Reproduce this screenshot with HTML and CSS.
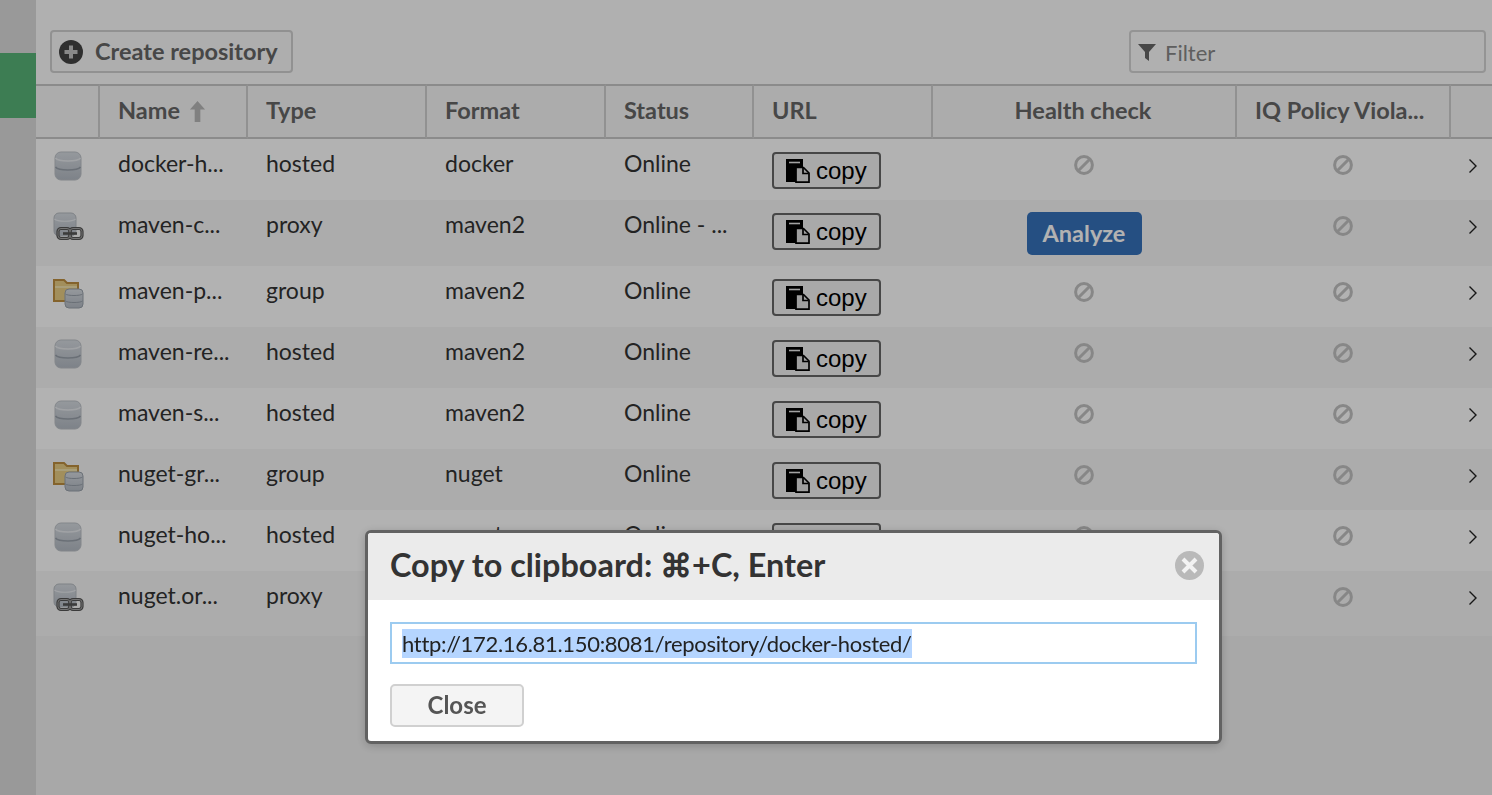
FILE: index.html
```html
<!DOCTYPE html>
<html lang="en">
<head>
  <meta charset="UTF-8">
  <meta name="viewport" content="width=device-width, initial-scale=1.0">
  <title>Repositories</title>
  <link rel="stylesheet" href="styles.css">
</head>
<body>
  <!-- shared icons -->
  <svg class="icon-defs" width="0" height="0">
    <defs>
      <linearGradient id="dbFill" x1="0" y1="0" x2="0" y2="1">
        <stop offset="0" stop-color="#d6dbe1"/>
        <stop offset="1" stop-color="#b4bbc4"/>
      </linearGradient>
      <symbol id="db" viewBox="0 0 32 32">
        <rect x="3" y="2" width="26" height="28" rx="6" fill="url(#dbFill)" stroke="#bcc1c7" stroke-width="1"/>
        <path d="M3.500 8c3 4 22 4 25 0" fill="none" stroke="#e6e9ed" stroke-width="1.500"/>
        <path d="M3.500 17c3 4 22 4 25 0" fill="none" stroke="#98a0aa" stroke-width="1.500"/>
      </symbol>
      <symbol id="proxy" viewBox="0 0 32 32">
        <rect x="2" y="2" width="22" height="23" rx="5" fill="url(#dbFill)" stroke="#b5bac0" stroke-width="1"/>
        <path d="M2.500 8c3 3 18 3 21 0" fill="none" stroke="#e6e9ed" stroke-width="1.200"/>
        <rect x="6" y="17.500" width="12" height="10" rx="3" fill="none" stroke="#555" stroke-width="3.200"/>
        <rect x="18" y="17.500" width="12" height="10" rx="3" fill="none" stroke="#555" stroke-width="3.200"/>
        <rect x="6" y="17.500" width="12" height="10" rx="3" fill="none" stroke="#b0b0b0" stroke-width="0.900"/>
        <rect x="18" y="17.500" width="12" height="10" rx="3" fill="none" stroke="#b0b0b0" stroke-width="0.900"/>
        <path d="M11 22.500h14" stroke="#555" stroke-width="2.600"/>
      </symbol>
      <symbol id="group" viewBox="0 0 32 32">
        <path d="M2 3h10l3 3h11v18H2z" fill="#e8cd85" stroke="#bd8f3f" stroke-width="2"/>
        <path d="M3 10h22" stroke="#f3e2ad" stroke-width="2"/>
        <rect x="13" y="12" width="18" height="19" rx="4" fill="url(#dbFill)" stroke="#9aa2ac" stroke-width="1"/>
        <path d="M13.500 17c2 2 15 2 17 0M13.500 24c2 2 15 2 17 0" fill="none" stroke="#98a0aa" stroke-width="1"/>
      </symbol>
      <symbol id="ban" viewBox="0 0 20 20">
        <circle cx="10" cy="10" r="8.400" fill="none" stroke="#c2c2c2" stroke-width="3"/>
        <path d="M4.500 15.500l11-11" stroke="#c2c2c2" stroke-width="3"/>
      </symbol>
      <symbol id="chevron" viewBox="0 0 10 16">
        <path d="M1.500 1.500L8 8l-6.500 6.500" fill="none" stroke="#222" stroke-width="1.400"/>
      </symbol>
      <symbol id="files" viewBox="0 0 24 24">
        <path d="M0 0h17v8h-7v15H0z" fill="#000"/>
        <path d="M3 3.500h11" stroke="#e8e8e8" stroke-width="1.600"/>
        <path d="M10 8.500h7.500l5.500 5.500v9.200H10z" fill="#e4e4e4" stroke="#000" stroke-width="1.700"/>
        <path d="M17 9v5.500h5.500" fill="none" stroke="#000" stroke-width="1.700"/>
      </symbol>
    </defs>
  </svg>

  <div class="page">
    <aside class="sidebar">
      <div class="sidebar-active"></div>
    </aside>

    <main class="content">
      <div class="toolbar">
        <button class="create-btn" type="button">
          <svg class="create-icon" viewBox="0 0 24 24">
            <circle cx="12" cy="12" r="12" fill="#444"/>
            <path d="M12 5.500v13M5.500 12h13" stroke="#c4c4c4" stroke-width="4"/>
          </svg>
          Create repository
        </button>
        <div class="filter">
          <svg class="filter-icon" viewBox="0 0 18 18">
            <path d="M0 1h18l-7 8v9l-4-3V9z" fill="#666"/>
          </svg>
          Filter
        </div>
      </div>

      <table class="repo-table">
        <colgroup>
          <col class="col-icon"><col class="col-name"><col class="col-type"><col class="col-format">
          <col class="col-status"><col class="col-url"><col class="col-health"><col class="col-iq"><col class="col-arrow">
        </colgroup>
        <thead>
          <tr>
            <th></th>
            <th>Name <svg class="sort-icon" viewBox="0 0 18 22"><path d="M9 0l8 9h-5v13H6V9H1z" fill="#b8b8b8"/></svg></th>
            <th>Type</th>
            <th>Format</th>
            <th>Status</th>
            <th>URL</th>
            <th class="center">Health check</th>
            <th>IQ Policy Viola...</th>
            <th></th>
          </tr>
        </thead>
        <tbody>
          <tr>
            <td class="icon-cell"><svg class="repo-icon"><use href="#db"/></svg></td>
            <td>docker-h...</td><td>hosted</td><td>docker</td><td>Online</td>
            <td><button class="copy-btn" type="button"><svg class="copy-icon"><use href="#files"/></svg>copy</button></td>
            <td class="center"><svg class="ban"><use href="#ban"/></svg></td>
            <td class="center"><svg class="ban"><use href="#ban"/></svg></td>
            <td class="arrow-cell"><svg class="chevron"><use href="#chevron"/></svg></td>
          </tr>
          <tr class="tall">
            <td class="icon-cell"><svg class="repo-icon"><use href="#proxy"/></svg></td>
            <td>maven-c...</td><td>proxy</td><td>maven2</td><td>Online - ...</td>
            <td><button class="copy-btn" type="button"><svg class="copy-icon"><use href="#files"/></svg>copy</button></td>
            <td class="center"><button class="analyze-btn" type="button">Analyze</button></td>
            <td class="center"><svg class="ban"><use href="#ban"/></svg></td>
            <td class="arrow-cell"><svg class="chevron"><use href="#chevron"/></svg></td>
          </tr>
          <tr>
            <td class="icon-cell"><svg class="repo-icon"><use href="#group"/></svg></td>
            <td>maven-p...</td><td>group</td><td>maven2</td><td>Online</td>
            <td><button class="copy-btn" type="button"><svg class="copy-icon"><use href="#files"/></svg>copy</button></td>
            <td class="center"><svg class="ban"><use href="#ban"/></svg></td>
            <td class="center"><svg class="ban"><use href="#ban"/></svg></td>
            <td class="arrow-cell"><svg class="chevron"><use href="#chevron"/></svg></td>
          </tr>
          <tr>
            <td class="icon-cell"><svg class="repo-icon"><use href="#db"/></svg></td>
            <td>maven-re...</td><td>hosted</td><td>maven2</td><td>Online</td>
            <td><button class="copy-btn" type="button"><svg class="copy-icon"><use href="#files"/></svg>copy</button></td>
            <td class="center"><svg class="ban"><use href="#ban"/></svg></td>
            <td class="center"><svg class="ban"><use href="#ban"/></svg></td>
            <td class="arrow-cell"><svg class="chevron"><use href="#chevron"/></svg></td>
          </tr>
          <tr>
            <td class="icon-cell"><svg class="repo-icon"><use href="#db"/></svg></td>
            <td>maven-s...</td><td>hosted</td><td>maven2</td><td>Online</td>
            <td><button class="copy-btn" type="button"><svg class="copy-icon"><use href="#files"/></svg>copy</button></td>
            <td class="center"><svg class="ban"><use href="#ban"/></svg></td>
            <td class="center"><svg class="ban"><use href="#ban"/></svg></td>
            <td class="arrow-cell"><svg class="chevron"><use href="#chevron"/></svg></td>
          </tr>
          <tr>
            <td class="icon-cell"><svg class="repo-icon"><use href="#group"/></svg></td>
            <td>nuget-gr...</td><td>group</td><td>nuget</td><td>Online</td>
            <td><button class="copy-btn" type="button"><svg class="copy-icon"><use href="#files"/></svg>copy</button></td>
            <td class="center"><svg class="ban"><use href="#ban"/></svg></td>
            <td class="center"><svg class="ban"><use href="#ban"/></svg></td>
            <td class="arrow-cell"><svg class="chevron"><use href="#chevron"/></svg></td>
          </tr>
          <tr>
            <td class="icon-cell"><svg class="repo-icon"><use href="#db"/></svg></td>
            <td>nuget-ho...</td><td>hosted</td><td>nuget</td><td>Online</td>
            <td><button class="copy-btn" type="button"><svg class="copy-icon"><use href="#files"/></svg>copy</button></td>
            <td class="center"><svg class="ban"><use href="#ban"/></svg></td>
            <td class="center"><svg class="ban"><use href="#ban"/></svg></td>
            <td class="arrow-cell"><svg class="chevron"><use href="#chevron"/></svg></td>
          </tr>
          <tr class="last">
            <td class="icon-cell"><svg class="repo-icon"><use href="#proxy"/></svg></td>
            <td>nuget.or...</td><td>proxy</td><td>nuget</td><td>Online</td>
            <td><button class="copy-btn" type="button"><svg class="copy-icon"><use href="#files"/></svg>copy</button></td>
            <td class="center"><svg class="ban"><use href="#ban"/></svg></td>
            <td class="center"><svg class="ban"><use href="#ban"/></svg></td>
            <td class="arrow-cell"><svg class="chevron"><use href="#chevron"/></svg></td>
          </tr>
        </tbody>
      </table>
    </main>
  </div>

  <div class="mask"></div>

  <div class="dialog">
    <div class="dialog-head">
      <span class="dialog-title">Copy to clipboard: ⌘+C, Enter</span>
      <svg class="dialog-close" viewBox="0 0 29 29">
        <circle cx="14.500" cy="14.500" r="14.500" fill="#b9b9b9"/>
        <path d="M8 8l13 13M21 8L8 21" stroke="#f2f2f2" stroke-width="4"/>
      </svg>
    </div>
    <div class="dialog-body">
      <div class="url-field"><span class="url-selected">http://172.16.81.150:8081/repository/docker-hosted/</span></div>
      <button class="close-btn" type="button">Close</button>
    </div>
  </div>
</body>
</html>
```

FILE: styles.css
```css
html, body {
  margin: 0;
  padding: 0;
  height: 100%;
  overflow: hidden;
}
body {
  font-family: Lato, "Open Sans", sans-serif;
  color: #333;
  background-color: #fff;
}
.icon-defs {
  position: absolute;
}

.page {
  display: flex;
  height: 100%;
}
.sidebar {
  width: 36px;
  flex-shrink: 0;
  padding-top: 53px;
  box-sizing: border-box;
  background-color: #dbdbdb;
}
.sidebar-active {
  height: 65px;
  background-color: #58b378;
}
.content {
  flex: 1;
  min-width: 0;
  background-color: #f1f1f1;
}

.toolbar {
  display: flex;
  justify-content: space-between;
  align-items: flex-start;
  height: 84px;
  box-sizing: border-box;
  padding: 30px 6px 0 14px;
  background-color: #fdfdfd;
}
.create-btn {
  display: flex;
  align-items: center;
  gap: 12px;
  width: 243px;
  height: 43px;
  padding: 0 7px 2px;
  border: 2px solid #d0d0d0;
  border-radius: 4px;
  background-color: #fafafa;
  color: #666;
  font-family: inherit;
  font-size: 23.5px;
  font-weight: 700;
  white-space: nowrap;
}
.create-icon {
  width: 24px;
  height: 24px;
  flex-shrink: 0;
  margin-top: 2px;
}
.filter {
  display: flex;
  align-items: center;
  gap: 9px;
  width: 357px;
  height: 43px;
  box-sizing: border-box;
  padding: 1px 7px 0;
  border: 2px solid #d4d4d4;
  border-radius: 4px;
  font-size: 22px;
  color: #888;
}
.filter-icon {
  width: 18px;
  height: 18px;
}

.repo-table {
  width: 1456px;
  border-collapse: separate;
  border-spacing: 0;
  table-layout: fixed;
  font-size: 23px;
}
.col-icon { width: 64px; }
.col-name { width: 148px; }
.col-type { width: 179px; }
.col-format { width: 179px; }
.col-status { width: 148px; }
.col-url { width: 179px; }
.col-health { width: 304px; }
.col-iq { width: 214px; }

.repo-table thead tr {
  background-color: #f7f7f7;
}
.repo-table th {
  height: 55px;
  box-sizing: border-box;
  padding: 0 0 4px 18px;
  border-top: 2px solid #c8c8c8;
  border-bottom: 2px solid #c8c8c8;
  border-right: 2px solid #d0d0d0;
  color: #666;
  font-size: 23.5px;
  font-weight: 700;
  text-align: left;
  white-space: nowrap;
}
.repo-table th:last-child {
  border-right: 0;
}
.repo-table th.center {
  padding-left: 0;
  padding-right: 2px;
  text-align: center;
}
.sort-icon {
  width: 17px;
  height: 21px;
  margin-left: 3px;
  vertical-align: -3px;
}

.repo-table td {
  height: 61px;
  box-sizing: border-box;
  padding: 10px 0 0 18px;
  vertical-align: top;
  white-space: nowrap;
  overflow: hidden;
}
.repo-table tbody tr {
  background-color: #fff;
}
.repo-table tbody tr:nth-child(even) {
  background-color: #f7f7f7;
}
.repo-table tr.tall td {
  height: 66px;
}
.repo-table tr.last td {
  height: 65px;
}
.repo-table td.center {
  padding: 16px 2px 0 0;
  text-align: center;
}
.repo-table td.icon-cell {
  padding: 11px 0 0 16px;
}
.repo-table td.arrow-cell {
  padding: 19px 0 0 17px;
}

.repo-icon {
  display: block;
  width: 32px;
  height: 32px;
}
.ban {
  display: block;
  width: 20px;
  height: 20px;
  margin: 0 auto;
}
.chevron {
  display: block;
  width: 10px;
  height: 16px;
}

.copy-btn {
  display: flex;
  align-items: center;
  gap: 6px;
  width: 109px;
  height: 37px;
  margin-top: 3px;
  padding: 0 0 0 12px;
  border: 2px solid #666;
  border-radius: 4px;
  background-color: #f2f2f2;
  color: #000;
  font-family: "Liberation Sans", Arial, sans-serif;
  font-size: 24px;
}
.copy-icon {
  width: 24px;
  height: 24px;
  flex-shrink: 0;
}
.analyze-btn {
  display: block;
  width: 115px;
  height: 43px;
  margin: -4px auto 0;
  padding: 0 0 2px;
  border: 0;
  border-radius: 5px;
  background-color: #3572bb;
  color: #fff;
  font-family: inherit;
  font-size: 23.5px;
  font-weight: 700;
}

.mask {
  position: fixed;
  inset: 0;
  background-color: rgba(0, 0, 0, 0.3);
}

.dialog {
  position: fixed;
  left: 365px;
  top: 530px;
  width: 857px;
  height: 214px;
  box-sizing: border-box;
  border: 3px solid #626262;
  border-radius: 6px;
  background-color: #fff;
  box-shadow: 0 2px 10px rgba(0, 0, 0, 0.2);
  overflow: hidden;
}
.dialog-head {
  display: flex;
  align-items: center;
  justify-content: space-between;
  height: 67px;
  box-sizing: border-box;
  padding: 0 15px 2px 22px;
  background-color: #ebebeb;
}
.dialog-title {
  margin-top: -2px;
  font-size: 32.4px;
  font-weight: 700;
  color: #333;
}
.dialog-close {
  width: 29px;
  height: 29px;
}
.dialog-body {
  padding: 22px 22px 0;
}
.url-field {
  display: flex;
  align-items: center;
  height: 42px;
  box-sizing: border-box;
  padding: 0 10px;
  border: 2px solid #9ccbf0;
  font-size: 22px;
  letter-spacing: -0.31px;
  color: #222;
  white-space: nowrap;
}
.url-selected {
  padding: 1px 0;
  background-color: #b5d5ff;
}
.close-btn {
  display: block;
  width: 134px;
  height: 43px;
  margin-top: 20px;
  padding: 0 0 2px;
  border: 2px solid #d0d0d0;
  border-radius: 5px;
  background-color: #f4f4f4;
  color: #555;
  font-family: inherit;
  font-size: 24px;
  font-weight: 700;
}
```
